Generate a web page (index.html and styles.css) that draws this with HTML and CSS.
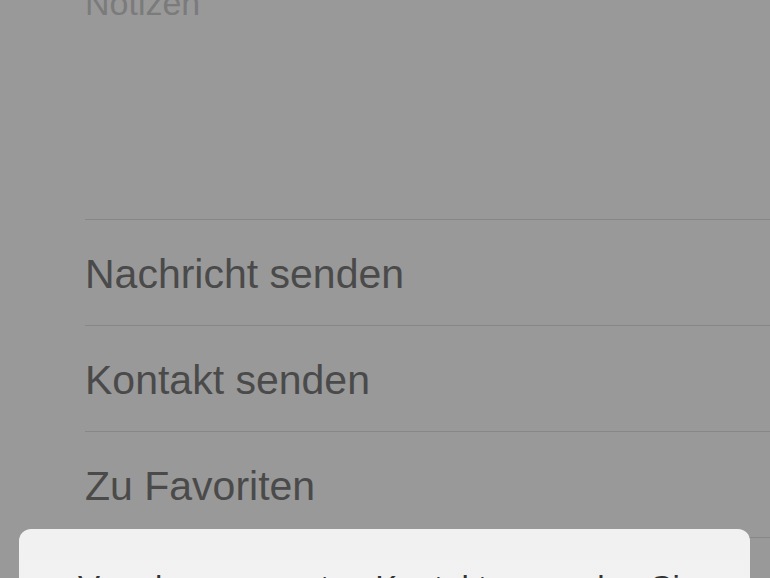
FILE: index.html
```html
<!DOCTYPE html>
<html lang="de">
<head>
<meta charset="utf-8">
<title>Kontakt</title>
<link rel="stylesheet" href="styles.css">
</head>
<body>
<div class="screen">
  <section class="notes">
    <div class="notes-label">Notizen</div>
  </section>
  <ul class="actions">
    <li class="action">Nachricht senden</li>
    <li class="action">Kontakt senden</li>
    <li class="action">Zu Favoriten</li>
    <li class="action">Anrufer sperren</li>
  </ul>
  <div class="alert">
    <p class="alert-text">Von den gesperrten Kontakten werden Sie keine Anrufe, Nachrichten oder FaceTime-Anrufe erhalten.</p>
  </div>
</div>
</body>
</html>
```

FILE: styles.css
```css
html, body {
  margin: 0;
  padding: 0;
  background: #999999;
}
body {
  width: 770px;
  height: 578px;
  overflow: hidden;
  font-family: "Liberation Sans", Arial, sans-serif;
}
.screen {
  position: relative;
  width: 770px;
  height: 578px;
  overflow: hidden;
}
.notes {
  display: flow-root;
  height: 219px;
}
.notes-label {
  margin-top: -14px;
  padding-left: 85px;
  font-size: 34px;
  line-height: 34px;
  color: #7b7b7b;
}
.actions {
  list-style: none;
  margin: 0;
  padding: 0 0 0 85px;
}
.action {
  box-sizing: border-box;
  height: 106px;
  border-top: 1px solid #878787;
  padding-top: 34px;
  font-size: 41px;
  line-height: 40px;
  color: #4a4a4a;
  white-space: nowrap;
}
.alert {
  position: absolute;
  left: 19px;
  top: 529px;
  width: 731px;
  height: 200px;
  box-sizing: border-box;
  padding: 38px 30px 0 59px;
  border-radius: 12px;
  background: linear-gradient(#f1f1f1, #f3f3f3);
}
.alert-text {
  margin: 0;
  font-size: 33px;
  line-height: 42px;
  color: #333333;
}
```
